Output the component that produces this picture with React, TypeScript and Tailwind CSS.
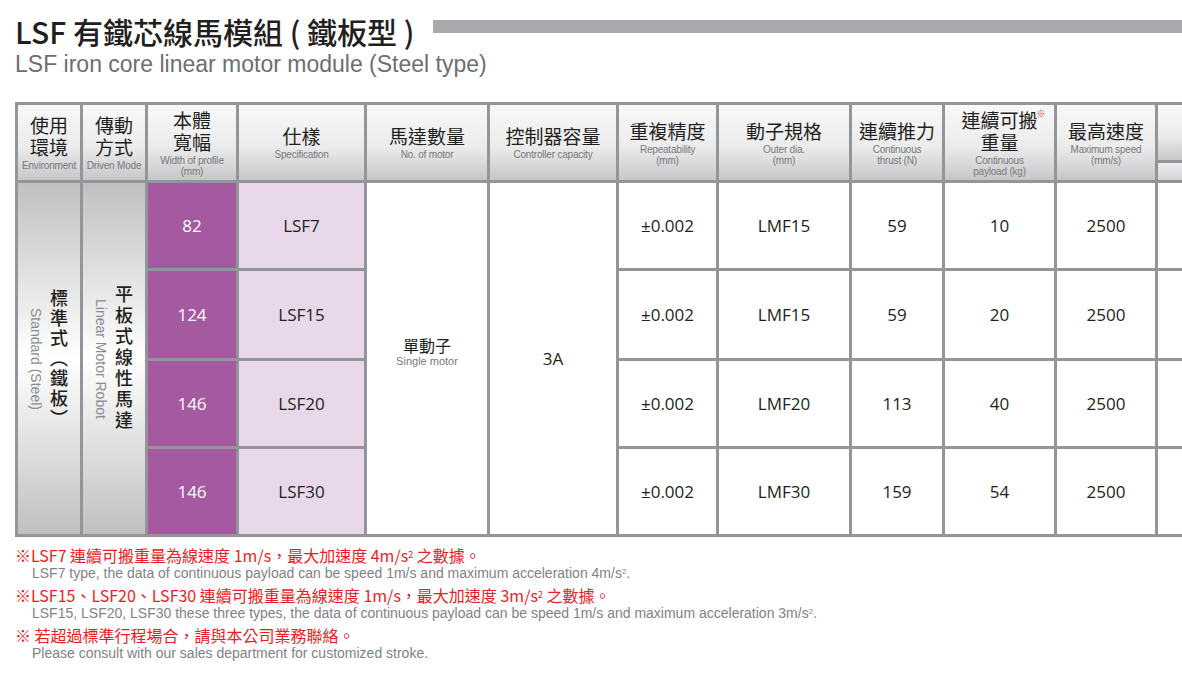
import React from "react";

const headGrad =
  "bg-[linear-gradient(to_bottom,#f8f8f8_0%,#ececed_55%,#c6c7c9_100%)]";
const sideGrad =
  "bg-[linear-gradient(to_bottom,#bfc0c2_0%,#f0f0f1_38%,#ffffff_50%,#f0f0f1_62%,#bfc0c2_100%)]";

const cjk = "font-['Noto_Sans_CJK_TC',sans-serif]";
const latin = "font-['Liberation_Sans',Arial,sans-serif]";
const num = "font-['Open_Sans','Noto_Sans',sans-serif]";

type Head = { zh: string[]; en: string[]; mark?: boolean };

const heads: Head[] = [
  { zh: ["使用", "環境"], en: ["Environment"] },
  { zh: ["傳動", "方式"], en: ["Driven Mode"] },
  { zh: ["本體", "寬幅"], en: ["Width of profile", "(mm)"] },
  { zh: ["仕樣"], en: ["Specification"] },
  { zh: ["馬達數量"], en: ["No. of motor"] },
  { zh: ["控制器容量"], en: ["Controller capacity"] },
  { zh: ["重複精度"], en: ["Repeatability", "(mm)"] },
  { zh: ["動子規格"], en: ["Outer dia.", "(mm)"] },
  { zh: ["連續推力"], en: ["Continuous", "thrust (N)"] },
  { zh: ["連續可搬", "重量"], en: ["Continuous", "payload (kg)"], mark: true },
  { zh: ["最高速度"], en: ["Maximum speed", "(mm/s)"] },
];

const rows = [
  { w: "82", spec: "LSF7", rep: "±0.002", dia: "LMF15", thrust: "59", load: "10", speed: "2500" },
  { w: "124", spec: "LSF15", rep: "±0.002", dia: "LMF15", thrust: "59", load: "20", speed: "2500" },
  { w: "146", spec: "LSF20", rep: "±0.002", dia: "LMF20", thrust: "113", load: "40", speed: "2500" },
  { w: "146", spec: "LSF30", rep: "±0.002", dia: "LMF30", thrust: "159", load: "54", speed: "2500" },
];

function HeadCell({ h }: { h: Head }) {
  return (
    <div className={`${headGrad} flex flex-col items-center justify-center text-center`}>
      <div className={`${cjk} text-[19px] leading-[22px] text-[#231f20]`}>
        {h.zh.map((z, i) => (
          <React.Fragment key={z}>
            {i > 0 && <br />}
            {h.mark && i === 0 ? (
              <span className="relative">
                {z}
                <span className="absolute -right-[8px] top-[3px] text-[9px] leading-none text-[#ed1c24]">※</span>
              </span>
            ) : (
              z
            )}
          </React.Fragment>
        ))}
      </div>
      <div className={`${latin} mt-[2px] whitespace-nowrap text-[10px] leading-[11px] tracking-[-0.2px] text-[#77787b]`}>
        {h.en.map((e, i) => (
          <React.Fragment key={e}>
            {i > 0 && <br />}
            {e}
          </React.Fragment>
        ))}
      </div>
    </div>
  );
}

function Cell({ children, className = "bg-white text-[#231f20]" }: { children: React.ReactNode; className?: string }) {
  return (
    <div className={`${num} ${className} flex items-center justify-center text-[17px]`}>{children}</div>
  );
}

function Side({ zh, en, track }: { zh: string; en: string; track: string }) {
  return (
    <div className={`${sideGrad} row-span-4 flex justify-center`}>
      <div className="h-full text-center [writing-mode:vertical-rl]">
        <div className={`${cjk} text-[18px] font-medium leading-[22px] text-[#231f20] ${track}`}>{zh}</div>
        <div className={`${latin} mr-[5px] text-[14px] leading-[15px] text-[#8a8c8e]`}>{en}</div>
      </div>
    </div>
  );
}

export default function App() {
  return (
    <div className="h-[678px] w-[1182px] overflow-hidden bg-white pt-[13px]">
      <div className="flex items-start pl-[15px]">
        <h1 className={`${cjk} whitespace-nowrap text-[30px] font-medium leading-[36px] text-[#231f20]`}>
          LSF 有鐵芯線馬模組 ( 鐵板型 )
        </h1>
        <div className="ml-[18px] mt-[7px] h-[13px] flex-1 bg-[#a7a9ac]" />
      </div>
      <p className={`${latin} ml-[15px] mt-[2px] text-[23px] leading-[26px] text-[#6d6e71]`}>
        LSF iron core linear motor module (Steel type)
      </p>

      <div className="ml-[15px] mt-[25px] grid w-max grid-cols-[62px_62px_88px_125px_120px_126px_97px_130px_90px_109px_98px_120px] grid-rows-[75px_85px_87px_85px_85px] gap-[3px] bg-[#939598] p-[3px]">
        {heads.map((h) => (
          <HeadCell key={h.zh.join("")} h={h} />
        ))}
        <div className="flex flex-col gap-[3px] bg-[#939598]">
          <div className={`h-[55px] ${headGrad}`} />
          <div className="flex-1 bg-[linear-gradient(to_bottom,#ececed,#d3d4d6)]" />
        </div>

        {rows.map((r, i) => (
          <React.Fragment key={i}>
            {i === 0 && <Side zh="標準式（鐵板）" en="Standard (Steel)" track="tracking-[2px]" />}
            {i === 0 && <Side zh="平板式線性馬達" en="Linear Motor Robot" track="tracking-[3px]" />}
            <Cell className="bg-[#a459a0] text-white">{r.w}</Cell>
            <Cell className="bg-[#e8d8ea] text-[#231f20]">{r.spec}</Cell>
            {i === 0 && (
              <div className="row-span-4 flex flex-col items-center justify-center bg-white pb-[14px]">
                <div className={`${cjk} text-[16px] leading-[20px] text-[#231f20]`}>單動子</div>
                <div className={`${latin} text-[11px] leading-[13px] text-[#77787b]`}>Single motor</div>
              </div>
            )}
            {i === 0 && (
              <div className={`${num} row-span-4 flex items-center justify-center bg-white text-[17px] text-[#231f20]`}>
                3A
              </div>
            )}
            <Cell>{r.rep}</Cell>
            <Cell>{r.dia}</Cell>
            <Cell>{r.thrust}</Cell>
            <Cell>{r.load}</Cell>
            <Cell>{r.speed}</Cell>
            <Cell>{""}</Cell>
          </React.Fragment>
        ))}
      </div>

      <div className="ml-[15px] mt-[8px] flex flex-col gap-[3px]">
        <div>
          <p className={`${cjk} text-[16px] leading-[20px] text-[#ed1c24]`}>
            ※LSF7 連續可搬重量為線速度 1m/s，最大加速度 4m/s<sup className="text-[9px]">2</sup> 之數據。
          </p>
          <p className={`${latin} ml-[17px] text-[14px] leading-[17px] text-[#808285]`}>
            LSF7 type, the data of continuous payload can be speed 1m/s and maximum acceleration 4m/s
            <sup className="text-[8px]">2</sup>.
          </p>
        </div>
        <div>
          <p className={`${cjk} text-[16px] leading-[20px] text-[#ed1c24]`}>
            ※LSF15、LSF20、LSF30 連續可搬重量為線速度 1m/s，最大加速度 3m/s<sup className="text-[9px]">2</sup> 之數據。
          </p>
          <p className={`${latin} ml-[17px] text-[14px] leading-[17px] text-[#808285]`}>
            LSF15, LSF20, LSF30 these three types, the data of continuous payload can be speed 1m/s and maximum
            acceleration 3m/s<sup className="text-[8px]">2</sup>.
          </p>
        </div>
        <div>
          <p className={`${cjk} text-[16px] leading-[20px] text-[#ed1c24]`}>※ 若超過標準行程場合，請與本公司業務聯絡。</p>
          <p className={`${latin} ml-[17px] text-[14px] leading-[17px] text-[#808285]`}>
            Please consult with our sales department for customized stroke.
          </p>
        </div>
      </div>
    </div>
  );
}
